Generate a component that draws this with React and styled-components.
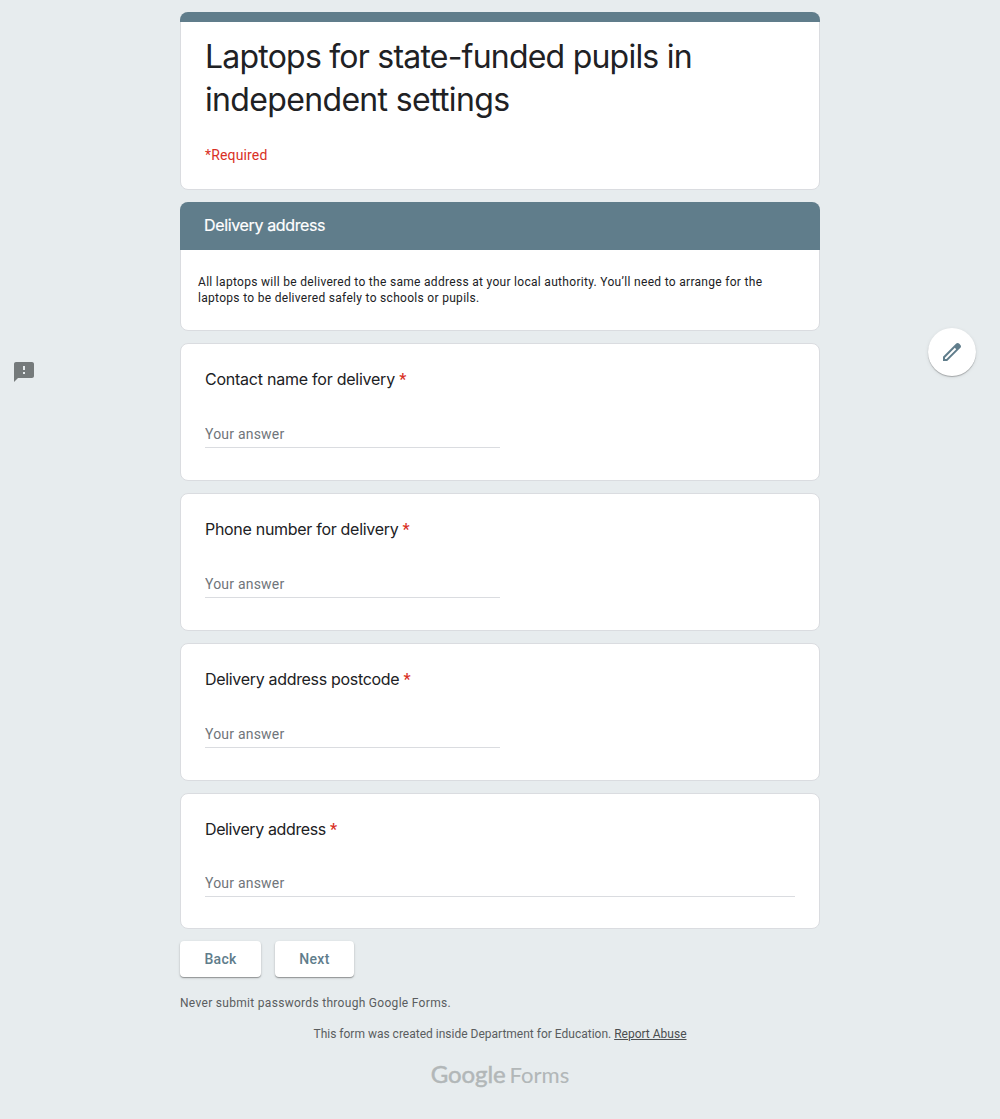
import React from "react";
import styled, { createGlobalStyle } from "styled-components";

const display = `Inter, "Open Sans", sans-serif`;
const logoFace = `Lato, "Open Sans", sans-serif`;
const body = `Roboto, "Liberation Sans", sans-serif`;
const slate = "#607d8b";

const GlobalStyle = createGlobalStyle`
  * { box-sizing: border-box; }
  body { margin: 0; background: #e7ecee; font-family: ${body}; color: #202124; }
`;

const Page = styled.div`
  min-height: 1119px;
  display: grid;
  grid-template-columns: 180px 640px 180px;
`;

const LeftRail = styled.aside`
  padding: 360px 0 0 12px;
`;

const RightRail = styled.aside`
  padding: 328px 24px 0 0;
  display: flex;
  justify-content: flex-end;
  align-items: flex-start;
`;

const EditButton = styled.button`
  width: 48px;
  height: 48px;
  border: 0;
  padding: 0;
  border-radius: 50%;
  background: #fff;
  display: flex;
  align-items: center;
  justify-content: center;
  box-shadow: 0 1px 1px rgba(0, 0, 0, 0.26), 0 1px 4px rgba(0, 0, 0, 0.08);
`;

const Form = styled.main`
  display: flex;
  flex-direction: column;
  gap: 12px;
  padding-top: 12px;
`;

const Card = styled.section`
  height: ${(p) => p.$height}px;
  background: #fff;
  border: 1px solid #dadce0;
  border-radius: 8px;
  padding: ${(p) => p.$padding || "0 24px"};
`;

const Band = styled.div`
  height: ${(p) => p.$height}px;
  margin: -1px -1px 0;
  border-radius: 8px 8px 0 0;
  background: ${slate};
  color: #fff;
  display: flex;
  align-items: center;
  padding: 0 24px;
`;

const Padded = styled.div`
  padding: 13px 24px 0;
`;

const Title = styled.h1`
  margin: 0;
  font: 400 32px/43px ${display};
  letter-spacing: -0.8px;
`;

const TitleLine = styled.span`
  display: block;
  letter-spacing: ${(p) => p.$tracking}px;
`;

const Required = styled.p`
  margin: 24px 0 0;
  font-size: 14px;
  line-height: 20px;
  letter-spacing: 0.15px;
  color: #d93025;
`;

const BandTitle = styled.h2`
  margin: 0;
  padding-bottom: 2px;
  font: 400 16px/24px ${display};
  letter-spacing: -0.36px;
  -webkit-text-stroke: 0.2px currentColor;
`;

const Description = styled.p`
  margin: 0;
  padding: 24px 40px 0 17px;
  font-size: 12px;
  line-height: 16px;
  letter-spacing: 0.3px;
`;

const Question = styled.h3`
  margin: 0;
  font: 400 16px/24px ${display};
  letter-spacing: ${(p) => p.$tracking}px;
`;

const Star = styled.span`
  font-family: ${body};
  font-size: 16px;
  font-weight: 500;
  letter-spacing: 0;
  color: #d93025;
`;

const Answer = styled.input`
  display: block;
  width: ${(p) => (p.$wide ? "100%" : "50%")};
  height: 26px;
  margin-top: ${(p) => (p.$wide ? 29 : 30)}px;
  padding: 0 0 2px;
  border: 0;
  border-bottom: 1px solid #dadce0;
  outline: none;
  font: 400 14px/20px ${body};
  letter-spacing: 0.2px;
  background: transparent;
  &::placeholder { color: #70757a; opacity: 1; }
`;

const Actions = styled.div`
  display: flex;
  gap: 14px;
`;

const ActionButton = styled.button`
  width: ${(p) => p.$width}px;
  height: 36px;
  border: 0;
  border-radius: 4px;
  padding: 0;
  background: #fff;
  color: ${slate};
  font: 500 14px/20px ${body};
  letter-spacing: 0.3px;
  box-shadow: 0 1px 1px rgba(0, 0, 0, 0.3), 0 1px 3px rgba(0, 0, 0, 0.14);
`;

const Notice = styled.p`
  margin: 6px 0 0;
  font-size: 12px;
  line-height: 16px;
  letter-spacing: 0.3px;
  color: #5a5d5f;
`;

const Origin = styled.p`
  margin: 3px 0 0;
  text-align: center;
  font-size: 12px;
  line-height: 16px;
  color: #5a5d5f;
`;

const AbuseLink = styled.a`
  color: #4b4e50;
  text-decoration: underline;
`;

const Logo = styled.div`
  margin-top: 6px;
  display: flex;
  justify-content: center;
  align-items: baseline;
  gap: 4px;
  font: 400 22px/28px ${logoFace};
  color: #b2b7b8;
`;

const LogoName = styled.span`
  font-size: ${(p) => (p.$strong ? 24 : 22)}px;
  -webkit-text-stroke: ${(p) => (p.$strong ? 0.5 : 0.1)}px currentColor;
  letter-spacing: ${(p) => p.$tracking}px;
`;

const questions = [
  { label: "Contact name for delivery", height: 138, tracking: -0.24 },
  { label: "Phone number for delivery", height: 138, tracking: -0.3 },
  { label: "Delivery address postcode", height: 138, tracking: -0.32 },
  { label: "Delivery address", height: 136, tracking: -0.38, wide: true },
];

export default function App() {
  return (
    <>
      <GlobalStyle />
      <Page>
        <LeftRail>
          <svg width="24" height="24" viewBox="0 0 24 24" fill="#757a7b">
            <path d="M20 2H4c-1.1 0-1.99.9-1.99 2L2 22l4-4h14c1.1 0 2-.9 2-2V4c0-1.1-.9-2-2-2zm-7 12h-2v-2h2v2zm0-4h-2V6h2v4z" />
          </svg>
        </LeftRail>
        <Form>
          <Card $height={178} $padding="0">
            <Band $height={10} />
            <Padded>
              <Title>
                <TitleLine $tracking={-0.78}>Laptops for state-funded pupils in</TitleLine>
                <TitleLine $tracking={-0.66}>independent settings</TitleLine>
              </Title>
              <Required>*Required</Required>
            </Padded>
          </Card>
          <Card $height={129} $padding="0">
            <Band $height={48}>
              <BandTitle>Delivery address</BandTitle>
            </Band>
            <Description>
              All laptops will be delivered to the same address at your local authority. You’ll need to arrange for the
              laptops to be delivered safely to schools or pupils.
            </Description>
          </Card>
          {questions.map((q) => (
            <Card key={q.label} $height={q.height} $padding="23px 24px 0">
              <Question $tracking={q.tracking}>
                {q.label} <Star>*</Star>
              </Question>
              <Answer placeholder="Your answer" $wide={q.wide} />
            </Card>
          ))}
          <Actions>
            <ActionButton $width={81}>Back</ActionButton>
            <ActionButton $width={79}>Next</ActionButton>
          </Actions>
          <Notice>Never submit passwords through Google Forms.</Notice>
          <Origin>
            This form was created inside Department for Education. <AbuseLink>Report Abuse</AbuseLink>
          </Origin>
          <Logo>
            <LogoName $strong $tracking={-0.1}>Google</LogoName>
            <LogoName $tracking={0}>Forms</LogoName>
          </Logo>
        </Form>
        <RightRail>
          <EditButton>
            <svg width="24" height="24" viewBox="0 0 24 24" fill={slate}>
              <path d="M20.41 4.94l-1.35-1.35c-.78-.78-2.05-.78-2.83 0L3 16.82V21h4.18L20.41 7.77c.79-.78.79-2.05 0-2.83zM6.41 19.06L5 19v-1.36l9.82-9.82 1.41 1.41-9.82 9.83z" />
            </svg>
          </EditButton>
        </RightRail>
      </Page>
    </>
  );
}
